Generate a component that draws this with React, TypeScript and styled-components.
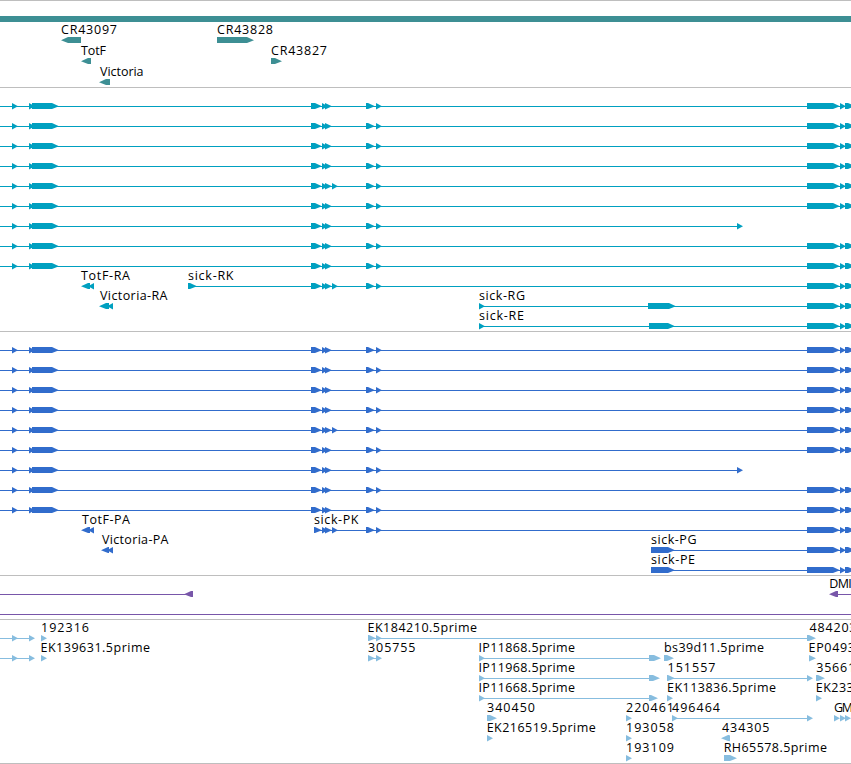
import React from "react";
import styled, { createGlobalStyle } from "styled-components";

type Dir = "right" | "left"

interface Exon {
    from: number
    to: number
    dir?: Dir
}

interface Label {
    text: string
    x: number
    width: number
}

interface Row {
    lines?: [number, number][]
    exons?: Exon[]
    labels?: Label[]
}

interface TrackProps {
    rows: Row[]
    color: string
    height: number
    first?: number
    pitch?: number
    children?: React.ReactNode
}

const VIEW_WIDTH = 851

const GENE = "#3d8f94"
const TRANSCRIPT = "#00a0c0"
const PROTEIN = "#316ccc"
const INSERTION = "#7856a9"
const EST = "#87bddf"

const right = (from: number, to: number): Exon => ({ from, to, dir: "right" })
const left = (from: number, to: number): Exon => ({ from, to, dir: "left" })
const label = (text: string, x: number, width: number): Label => ({ text, x, width })

const start = [right(12, 18), right(29, 35), right(32, 59)]
const middle = [right(311, 322), right(322, 328), right(325, 332)]
const extra = right(332, 338)
const pair = [right(366, 375), right(376, 382)]
const end = [right(807, 840), right(840, 846), right(845, 855)]

const full: Row = { lines: [[0, VIEW_WIDTH]], exons: [...start, ...middle, ...pair, ...end] }
const fullExtra: Row = { lines: [[0, VIEW_WIDTH]], exons: [...start, ...middle, extra, ...pair, ...end] }
const short: Row = { lines: [[0, 738]], exons: [...start, ...middle, ...pair, right(737, 743)] }

const isoforms: Row[] = [full, full, full, full, fullExtra, full, short, full, full]

const genes: Row[] = [
    { exons: [left(61, 81), right(217, 254)], labels: [label("CR43097", 61, 56), label("CR43828", 217, 56)] },
    { exons: [left(81, 91), right(271, 282)], labels: [label("TotF", 81, 25), label("CR43827", 271, 56)] },
    { exons: [left(99, 110)], labels: [label("Victoria", 100, 43.5)] },
]

const transcripts: Row[] = [
    ...isoforms,
    {
        lines: [[188, VIEW_WIDTH]],
        exons: [left(81, 90), left(88, 94), right(188, 197), ...middle, extra, ...pair, ...end],
        labels: [label("TotF-RA", 81, 49), label("sick-RK", 188, 45.5)],
    },
    {
        lines: [[479, VIEW_WIDTH]],
        exons: [left(99, 109), left(107, 113), right(479, 485), right(648, 676), ...end],
        labels: [label("Victoria-RA", 100, 67.5), label("sick-RG", 479, 46)],
    },
    {
        lines: [[479, VIEW_WIDTH]],
        exons: [right(479, 485), right(649, 675), ...end],
        labels: [label("sick-RE", 479, 45)],
    },
]

const proteins: Row[] = [
    ...isoforms,
    {
        lines: [[314, VIEW_WIDTH]],
        exons: [left(81, 90), left(88, 94), right(314, 322), right(322, 328), right(325, 332), extra, ...pair, ...end],
        labels: [label("TotF-PA", 82, 48), label("sick-PK", 314, 44.5)],
    },
    {
        lines: [[651, VIEW_WIDTH]],
        exons: [left(101, 109), left(107, 113), right(651, 675), ...end],
        labels: [label("Victoria-PA", 102, 66.5), label("sick-PG", 651, 45.5)],
    },
    {
        lines: [[651, VIEW_WIDTH]],
        exons: [right(651, 675), ...end],
        labels: [label("sick-PE", 651, 44)],
    },
]

const insertions: Row[] = [
    { lines: [[0, 190], [834, VIEW_WIDTH]], exons: [left(184, 193), left(829, 838)], labels: [label("DMI", 829.3, 22.5)] },
    { lines: [[0, VIEW_WIDTH]] },
]

const estStart = [right(12, 18), right(29, 35), right(41, 47)]

const ests: Row[] = [
    {
        lines: [[0, 34], [368, 812]],
        exons: [...estStart, right(368, 376), right(376, 382), right(807, 816)],
        labels: [label("192316", 41, 48), label("EK184210.5prime", 367.5, 109.5), label("484203", 809.5, 47)],
    },
    {
        lines: [[0, 34], [368, 380], [479, 650]],
        exons: [...estStart, right(368, 375), right(376, 382), right(479, 485), right(649, 661), right(664, 674), right(809, 816)],
        labels: [
            label("EK139631.5prime", 40.5, 109.5),
            label("305755", 368, 47.5),
            label("IP11868.5prime", 478.5, 96.5),
            label("bs39d11.5prime", 664, 100),
            label("EP0493", 808.5, 46.5),
        ],
    },
    {
        lines: [[479, 650], [668, 808]],
        exons: [right(479, 485), right(649, 660), right(667, 675), right(807, 813), right(816, 825)],
        labels: [label("IP11968.5prime", 478.5, 96.5), label("151557", 667.5, 48), label("35661", 816.2, 39)],
    },
    {
        lines: [[479, 650]],
        exons: [right(479, 485), right(649, 658), right(667, 673), right(816, 822)],
        labels: [label("IP11668.5prime", 478.5, 96.5), label("EK113836.5prime", 667, 109), label("EK233", 815.7, 38)],
    },
    {
        lines: [[672, 808]],
        exons: [right(487, 497), right(626, 632), right(672, 678), right(807, 813), right(834, 840), right(840, 846), right(845, 851)],
        labels: [label("340450", 487, 48), label("220461", 626, 48), label("496464", 672, 48), label("GM", 834, 19)],
    },
    {
        exons: [right(487, 493), right(626, 632), left(721, 729), left(725, 730)],
        labels: [label("EK216519.5prime", 486.7, 109), label("193058", 626, 48), label("434305", 722, 47.5)],
    },
    {
        exons: [right(626, 632), right(724, 737)],
        labels: [label("193109", 626, 48), label("RH65578.5prime", 723.7, 103.3)],
    },
]

// block with a pointed tip, narrow exons are only the tip
const exonPoints = ({ from, to, dir }: Exon, y: number) => {
    const tip = Math.min(7, to - from)
    const top = y - 3
    const bottom = to - from < 8 ? y + 3.6 : y + 3
    const mid = y + 0.2

    if (dir === "left") {
        return `${to},${top} ${from + tip},${top} ${from},${mid} ${from + tip},${bottom} ${to},${bottom}`
    }
    return `${from},${top} ${to - tip},${top} ${to},${mid} ${to - tip},${bottom} ${from},${bottom}`
}

const Track = ({ rows, color, height, first = 18, pitch = 20, children }: TrackProps) => {
    return (
        <Panel>
            {children}
            <Canvas width={VIEW_WIDTH} height={height}>
                {rows.map((row, i) => {
                    const y = first + i * pitch
                    return (
                        <g key={i}>
                            {row.lines?.map(([from, to]) => (
                                <Intron key={from} x={from} y={y} width={to - from} height={1} fill={color} />
                            ))}
                            {row.exons?.map(exon => (
                                <polygon key={exon.from} points={exonPoints(exon, y)} fill={color} />
                            ))}
                            {row.labels?.map(({ text, x, width }) => (
                                <Name key={text} x={x} y={y - 6} textLength={width}>{text}</Name>
                            ))}
                        </g>
                    )
                })}
            </Canvas>
        </Panel>
    )
}

const App = () => {
    return (
        <>
        <GlobalStyle />
        <Browser>
            <Track rows={genes} color={GENE} height={64} first={17} pitch={21}>
                <SpanningGene />
            </Track>
            <Track rows={transcripts} color={TRANSCRIPT} height={243} />
            <Track rows={proteins} color={PROTEIN} height={243} />
            <Track rows={insertions} color={INSERTION} height={43} />
            <Track rows={ests} color={EST} height={143} />
        </Browser>
        </>
    )
}

const GlobalStyle = createGlobalStyle`
    body {
        margin: 0;
        background-color: #fff;
    }
`

const Browser = styled.main`
    display: flex;
    flex-direction: column;
    width: ${VIEW_WIDTH}px;
    overflow: hidden;
    border-bottom: 1px solid #bebebe;
`

const Panel = styled.section`
    display: flex;
    flex-direction: column;
    border-top: 1px solid #bebebe;
`

const SpanningGene = styled.div`
    height: 6px;
    margin-top: 15px;
    margin-bottom: 1px;
    background-color: ${GENE};
`

const Canvas = styled.svg`
    display: block;
    overflow: visible;
`

const Intron = styled.rect`
    shape-rendering: crispEdges;
`

const Name = styled.text`
    font-family: "Open Sans", "Noto Sans", sans-serif;
    font-size: 12.5px;
    fill: #000;
`

export default App
